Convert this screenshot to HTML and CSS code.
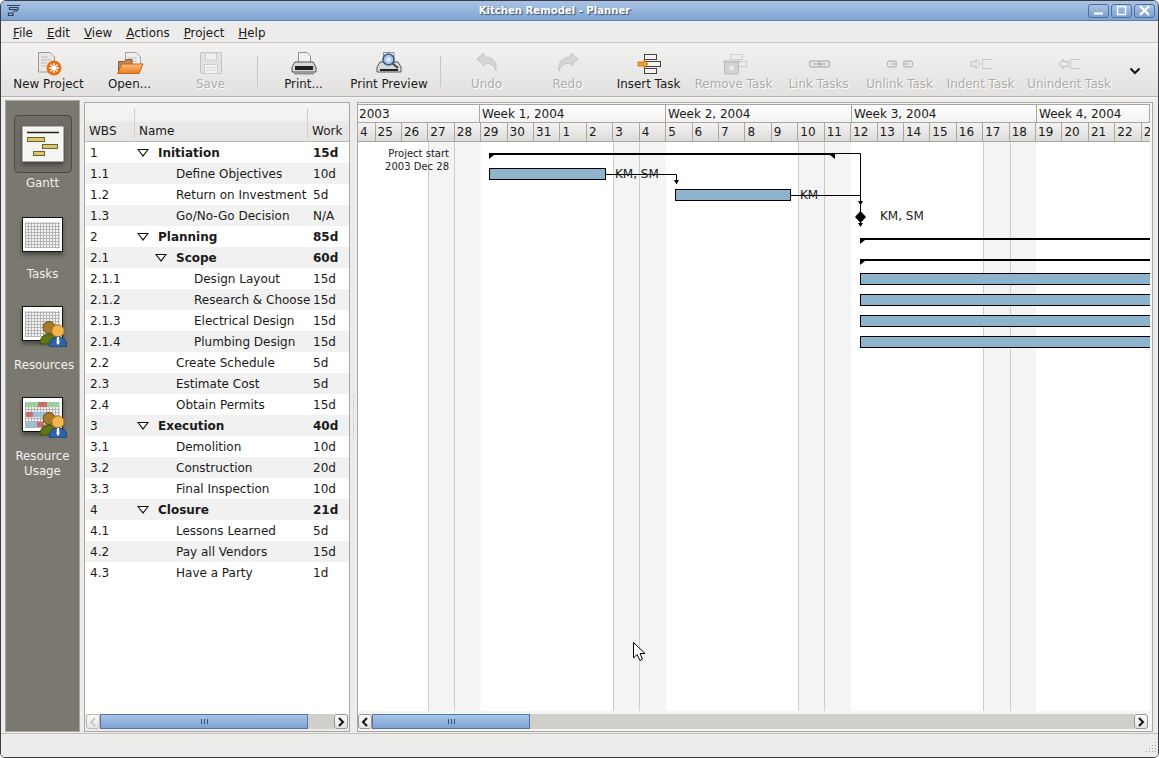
FILE: index.html
```html
<!DOCTYPE html>
<html lang="en">
<head>
  <meta charset="UTF-8">
  <title>Kitchen Remodel - Planner</title>
  <link rel="stylesheet" href="styles.css">
</head>
<body>
  <svg class="defs" width="0" height="0">
    <defs>
      <pattern id="grid" width="3" height="3" patternUnits="userSpaceOnUse">
        <rect width="3" height="3" fill="#f4f4f4"/>
        <path d="M0 .5H3M.5 0V3" stroke="#b4b4b4" stroke-width="1"/>
      </pattern>
      <linearGradient id="fold" x1="0" y1="0" x2="0" y2="1">
        <stop offset="0" stop-color="#fbbf7c"/>
        <stop offset="1" stop-color="#ea7d20"/>
      </linearGradient>
      <symbol id="people" viewBox="0 0 28 26">
        <circle cx="10" cy="6.500" r="6" fill="#a87a2c" stroke="#6d4c14"/>
        <path d="M1 23c0-7 4-10 9-10s9 3 9 10z" fill="#5f7516" stroke="#3e4e0c"/>
        <circle cx="19" cy="10" r="6" fill="#f3b550" stroke="#c07f1c"/>
        <path d="M10 25c0-6 4-9 9-9s9 3 9 9c-4 1.500-14 1.500-18 0z" fill="#2f63a8" stroke="#1e4076"/>
        <path d="M18 16h2l.5 6-1.500 2-1.500-2z" fill="#fff"/>
      </symbol>
    </defs>
  </svg>

  <div class="window">
    <header class="titlebar">
      <svg class="title-icon" width="15" height="14" viewBox="0 0 15 14">
        <path d="M1 1.500H14M3.500 5.500H12V3.500H3.500zM2.500 11.500H7V9H2.500zM7 7H12" fill="none" stroke="#2d3f58" stroke-width="1.200"/>
      </svg>
      <div class="title-text">Kitchen Remodel - Planner</div>
      <div class="title-buttons">
        <span class="wm-btn"><svg width="19" height="11" viewBox="0 0 19 11"><path d="M5 8.500H14" stroke="#fff" stroke-width="2"/></svg></span>
        <span class="wm-btn"><svg width="19" height="11" viewBox="0 0 19 11"><rect x="5.500" y="1.500" width="8" height="8" fill="none" stroke="#fff" stroke-width="1.500"/></svg></span>
        <span class="wm-btn"><svg width="19" height="11" viewBox="0 0 19 11"><path d="M5 1L14 10M14 1L5 10" stroke="#fff" stroke-width="2.200"/></svg></span>
      </div>
    </header>

    <nav class="menubar">
      <span><u>F</u>ile</span>
      <span><u>E</u>dit</span>
      <span><u>V</u>iew</span>
      <span><u>A</u>ctions</span>
      <span><u>P</u>roject</span>
      <span><u>H</u>elp</span>
    </nav>

    <div class="toolbar">
      <div class="tool">
        <svg width="32" height="24" viewBox="0 0 32 24">
          <path d="M5.500 .5H17L21.500 5V20H5.500z" fill="#e8e8e6" stroke="#9a9a98"/>
          <path d="M8 5H15M8 8H18M8 11H14M8 14H13" stroke="#bdbdbb"/>
          <circle cx="21" cy="16" r="7.500" fill="#ea6f17"/>
          <path d="M21 11V21M16 16H26M17.500 12.500L24.500 19.500M24.500 12.500L17.500 19.500" stroke="#fff" stroke-width="1.300"/>
        </svg>
        <span>New Project</span>
      </div>
      <div class="tool">
        <svg width="32" height="24" viewBox="0 0 32 24">
          <path d="M11.500 .5H22L26.500 5V18H11.500z" fill="#eee" stroke="#a0a0a0"/>
          <path d="M14 6H23M14 9H23" stroke="#c4c4c4"/>
          <path d="M4.500 9.500H10L12 7.500H18V20H4.500z" fill="#b98a56" stroke="#8a5d2c"/>
          <path d="M8 12H29L25 21.500H3.500z" fill="url(#fold)" stroke="#c4651a"/>
        </svg>
        <span>Open...</span>
      </div>
      <div class="tool off">
        <svg width="32" height="24" viewBox="0 0 32 24">
          <rect x="5.500" y=".5" width="21" height="21" rx="1" fill="#e3e2e0" stroke="#c4c3c1"/>
          <rect x="10.500" y="1" width="11" height="7" fill="#f1f0ef" stroke="#cfcecc"/>
          <rect x="9.500" y="12.500" width="13" height="9" fill="#f4f3f2" stroke="#cfcecc"/>
          <path d="M11.500 15.500H20.500M11.500 18H20.500" stroke="#d5d4d2"/>
        </svg>
        <span>Save</span>
      </div>
      <div class="sep"></div>
      <div class="tool">
        <svg width="32" height="24" viewBox="0 0 32 24">
          <path d="M10.500 .5H19L22.500 4V12H10.500z" fill="#f2f2f2" stroke="#8f8f8f"/>
          <path d="M7 10H25L28 15V20H4V15z" fill="#d8d8d8" stroke="#555"/>
          <rect x="7" y="14" width="18" height="4" fill="#1e1e1e"/>
          <path d="M6 20.500H26V22.500H6z" fill="#8f8f8f"/>
          <circle cx="25.500" cy="15.500" r="1" fill="#5fc24a"/>
        </svg>
        <span>Print...</span>
      </div>
      <div class="tool preview">
        <svg width="32" height="24" viewBox="0 0 32 24">
          <path d="M10.500 .5H21V12H10.500z" fill="#f2f2f2" stroke="#8f8f8f"/>
          <path d="M7 10H25L28 15V20H4V15z" fill="#d8d8d8" stroke="#555"/>
          <rect x="7" y="17" width="18" height="2" fill="#222"/>
          <circle cx="15.500" cy="7.500" r="5.500" fill="#a8c5e8" stroke="#345a8a" stroke-width="1.500"/>
          <circle cx="15.500" cy="7.500" r="2.200" fill="#e3eefb"/>
          <path d="M19.500 11.500L25 16" stroke="#444" stroke-width="2"/>
        </svg>
        <span>Print Preview</span>
      </div>
      <div class="sep"></div>
      <div class="tool off">
        <svg width="32" height="24" viewBox="0 0 32 24">
          <path d="M6 7L13 1V5C21 5 26 9 25 19C23 13 19 11 13 11V14z" fill="#d6d5d3" stroke="#c6c5c3"/>
        </svg>
        <span>Undo</span>
      </div>
      <div class="tool off">
        <svg width="32" height="24" viewBox="0 0 32 24">
          <path d="M26 7L19 1V5C11 5 6 9 7 19C9 13 13 11 19 11V14z" fill="#d6d5d3" stroke="#c6c5c3"/>
        </svg>
        <span>Redo</span>
      </div>
      <div class="tool">
        <svg width="32" height="24" viewBox="0 0 32 24">
          <g fill="#f4f3f2" stroke="#444">
            <rect x="11.500" y="2.500" width="12" height="5"/>
            <rect x="11.500" y="9.500" width="16" height="5"/>
            <rect x="11.500" y="16.500" width="12" height="5"/>
          </g>
          <path d="M5 10H11V8L15 12L11 16V14H5z" fill="#f0a030" stroke="#b86c10" stroke-width=".8"/>
        </svg>
        <span>Insert Task</span>
      </div>
      <div class="tool off remove">
        <svg width="32" height="24" viewBox="0 0 32 24">
          <g fill="none" stroke="#cfcecc">
            <rect x="12.500" y="2.500" width="12" height="5"/>
            <rect x="12.500" y="9.500" width="16" height="5"/>
          </g>
          <path d="M6.500 10.500H20.500V22H6.500z" fill="#d3d2d0" stroke="#bdbcba"/>
          <path d="M5 8.500H22V11H5z" fill="#c6c5c3"/>
          <circle cx="13.500" cy="16" r="2.500" fill="#ecebe9"/>
        </svg>
        <span>Remove Task</span>
      </div>
      <div class="tool off">
        <svg width="32" height="24" viewBox="0 0 32 24">
          <g fill="none" stroke="#b9b8b6" stroke-width="1.300">
            <rect x="6.500" y="9" width="11" height="6" rx="2.500"/>
            <rect x="15.500" y="9" width="11" height="6" rx="2.500"/>
            <path d="M10 12H23"/>
          </g>
        </svg>
        <span>Link Tasks</span>
      </div>
      <div class="tool off">
        <svg width="32" height="24" viewBox="0 0 32 24">
          <g fill="none" stroke="#bfbebc" stroke-width="1.300">
            <rect x="3.500" y="9" width="9" height="6" rx="2.500"/>
            <rect x="19.500" y="9" width="9" height="6" rx="2.500"/>
            <path d="M7 12H13M19 12H25"/>
          </g>
        </svg>
        <span>Unlink Task</span>
      </div>
      <div class="tool off">
        <svg width="32" height="24" viewBox="0 0 32 24">
          <path d="M6 9.500H11V7L15.500 12L11 17V14.500H6z" fill="#e8e7e5" stroke="#c4c3c1"/>
          <path d="M27 7.500H17.500V16.500H27" fill="none" stroke="#c9c8c6"/>
        </svg>
        <span>Indent Task</span>
      </div>
      <div class="tool off unindent">
        <svg width="32" height="24" viewBox="0 0 32 24">
          <path d="M15.500 9.500H10.500V7L6 12L10.500 17V14.500H15.500z" fill="#e8e7e5" stroke="#c4c3c1"/>
          <path d="M27 7.500H17.500V16.500H27" fill="none" stroke="#c9c8c6"/>
        </svg>
        <span>Unindent Task</span>
      </div>
      <svg class="more" width="12" height="8" viewBox="0 0 12 8">
        <path d="M1.500 1.500L6 6L10.500 1.500" fill="none" stroke="#111" stroke-width="2"/>
      </svg>
    </div>

    <main class="content">
      <aside class="sidebar">
        <div class="side-item">
          <div class="side-btn active">
            <svg class="sheet" width="42" height="36" viewBox="0 0 42 36">
              <rect x="1" y="1" width="40" height="34" fill="#f4f4f0" stroke="#fff"/>
              <path d="M5 6.500H37" stroke="#222" stroke-width="1.500"/>
              <g fill="#dcc56c" stroke="#6d6330">
                <rect x="5.500" y="11.500" width="17" height="4"/>
                <rect x="20.500" y="18.500" width="15" height="4"/>
                <rect x="11.500" y="25.500" width="11" height="4"/>
              </g>
            </svg>
          </div>
          <div class="side-label">Gantt</div>
        </div>
        <div class="side-item">
          <div class="side-btn">
            <svg class="sheet" width="42" height="36" viewBox="0 0 42 36">
              <rect x=".5" y=".5" width="40" height="34" fill="#fff" stroke="#111"/>
              <rect x="3" y="5" width="35" height="26" fill="url(#grid)"/>
            </svg>
          </div>
          <div class="side-label">Tasks</div>
        </div>
        <div class="side-item">
          <div class="side-btn">
            <div class="side-icon">
              <svg class="sheet" width="42" height="36" viewBox="0 0 42 36">
                <rect x=".5" y=".5" width="40" height="34" fill="#fff" stroke="#111"/>
                <rect x="3" y="5" width="35" height="26" fill="url(#grid)"/>
              </svg>
              <svg class="people" width="28" height="26"><use href="#people"/></svg>
            </div>
          </div>
          <div class="side-label">Resources</div>
        </div>
        <div class="side-item">
          <div class="side-btn">
            <div class="side-icon">
              <svg class="sheet" width="42" height="36" viewBox="0 0 42 36">
                <rect x=".5" y=".5" width="40" height="34" fill="#fff" stroke="#111"/>
                <rect x="3" y="5" width="35" height="26" fill="url(#grid)"/>
                <path d="M4 5H16V10H4zM25 5H37V10H25z" fill="#9ccf9a"/>
                <path d="M16 5H25V10H16zM4 15H11V20H4z" fill="#c96b70"/>
                <path d="M11 15H30V20H11zM4 25H15V30H4z" fill="#9cc0dc"/>
                <path d="M15 25H22V30H15z" fill="#c96b70"/>
              </svg>
              <svg class="people" width="28" height="26"><use href="#people"/></svg>
            </div>
          </div>
          <div class="side-label">Resource Usage</div>
        </div>
      </aside>

      <section class="pane tree-pane">
        <div class="tree-head">
          <div>WBS</div>
          <div class="sep-left">Name</div>
          <div class="sep-left">Work</div>
        </div>
        <div class="tree-body">
          <div class="row group"><div>1</div><div class="name"><i class="exp"></i>Initiation</div><div>15d</div></div>
          <div class="row"><div>1.1</div><div class="name d1"><i class="leaf"></i>Define Objectives</div><div>10d</div></div>
          <div class="row"><div>1.2</div><div class="name d1"><i class="leaf"></i>Return on Investment</div><div>5d</div></div>
          <div class="row"><div>1.3</div><div class="name d1"><i class="leaf"></i>Go/No-Go Decision</div><div>N/A</div></div>
          <div class="row group"><div>2</div><div class="name"><i class="exp"></i>Planning</div><div>85d</div></div>
          <div class="row group"><div>2.1</div><div class="name d1"><i class="exp"></i>Scope</div><div>60d</div></div>
          <div class="row"><div>2.1.1</div><div class="name d2"><i class="leaf"></i>Design Layout</div><div>15d</div></div>
          <div class="row"><div>2.1.2</div><div class="name d2"><i class="leaf"></i>Research &amp; Choose</div><div>15d</div></div>
          <div class="row"><div>2.1.3</div><div class="name d2"><i class="leaf"></i>Electrical Design</div><div>15d</div></div>
          <div class="row"><div>2.1.4</div><div class="name d2"><i class="leaf"></i>Plumbing Design</div><div>15d</div></div>
          <div class="row"><div>2.2</div><div class="name d1"><i class="leaf"></i>Create Schedule</div><div>5d</div></div>
          <div class="row"><div>2.3</div><div class="name d1"><i class="leaf"></i>Estimate Cost</div><div>5d</div></div>
          <div class="row"><div>2.4</div><div class="name d1"><i class="leaf"></i>Obtain Permits</div><div>15d</div></div>
          <div class="row group"><div>3</div><div class="name"><i class="exp"></i>Execution</div><div>40d</div></div>
          <div class="row"><div>3.1</div><div class="name d1"><i class="leaf"></i>Demolition</div><div>10d</div></div>
          <div class="row"><div>3.2</div><div class="name d1"><i class="leaf"></i>Construction</div><div>20d</div></div>
          <div class="row"><div>3.3</div><div class="name d1"><i class="leaf"></i>Final Inspection</div><div>10d</div></div>
          <div class="row group"><div>4</div><div class="name"><i class="exp"></i>Closure</div><div>21d</div></div>
          <div class="row"><div>4.1</div><div class="name d1"><i class="leaf"></i>Lessons Learned</div><div>5d</div></div>
          <div class="row"><div>4.2</div><div class="name d1"><i class="leaf"></i>Pay all Vendors</div><div>15d</div></div>
          <div class="row"><div>4.3</div><div class="name d1"><i class="leaf"></i>Have a Party</div><div>1d</div></div>
        </div>
        <div class="hscroll tree-scroll">
          <span class="sb-btn dim"><svg width="8" height="10" viewBox="0 0 8 10"><path d="M6 1L2 5L6 9" fill="none" stroke="#bbb" stroke-width="1.500"/></svg></span>
          <span class="sb-thumb"><b></b><b></b><b></b></span>
          <span class="sb-trough"></span>
          <span class="sb-btn"><svg width="8" height="10" viewBox="0 0 8 10"><path d="M2 1L6 5L2 9" fill="none" stroke="#111" stroke-width="2"/></svg></span>
        </div>
      </section>

      <div class="handle"></div>

      <section class="pane gantt-pane">
        <div class="years">
          <div>2003</div>
          <div>Week 1, 2004</div>
          <div>Week 2, 2004</div>
          <div>Week 3, 2004</div>
          <div>Week 4, 2004</div>
        </div>
        <div class="days">
          <div>4</div><div>25</div><div>26</div><div>27</div><div>28</div><div>29</div><div>30</div><div>31</div>
          <div>1</div><div>2</div><div>3</div><div>4</div><div>5</div><div>6</div><div>7</div><div>8</div><div>9</div>
          <div>10</div><div>11</div><div>12</div><div>13</div><div>14</div><div>15</div><div>16</div><div>17</div><div>18</div>
          <div>19</div><div>20</div><div>21</div><div>22</div><div>23</div>
        </div>
        <svg class="chart" width="792" height="569" viewBox="358 142 792 569">
          <g fill="#f4f4f4">
            <rect x="428" y="142" width="52.500" height="569"/>
            <rect x="613" y="142" width="53" height="569"/>
            <rect x="798" y="142" width="53" height="569"/>
            <rect x="983" y="142" width="53" height="569"/>
          </g>
          <path d="M428.500 142V711M454.500 142V711M613.500 142V711M639.500 142V711M798.500 142V711M824.500 142V711M983.500 142V711M1010.500 142V711" stroke="#cdcdcd"/>

          <g class="note">
            <text x="449" y="157" text-anchor="end">Project start</text>
            <text x="449" y="170" text-anchor="end">2003 Dec 28</text>
          </g>

          <!-- links -->
          <path d="M606 174.500H676.500V180M791 195.500H860.500M835 153.500H860.500V201M860.500 205V226" fill="none" stroke="#000"/>
          <path d="M674 180H679L676.500 184.500zM858 201H863L860.500 205.500zM858 223H863L860.500 227z" fill="#000"/>

          <!-- summary tasks -->
          <path d="M489 153H835V155H835V159L830 155H494L489 159z" fill="#000"/>
          <path d="M860 238H1150V240H865L860 244z" fill="#000"/>
          <path d="M860 259H1150V261H865L860 265z" fill="#000"/>

          <!-- tasks -->
          <g fill="#8db4cc" stroke="#000">
            <rect x="489.500" y="168.500" width="116" height="11"/>
            <rect x="675.500" y="189.500" width="115" height="11"/>
            <rect x="860.500" y="273.500" width="295" height="11"/>
            <rect x="860.500" y="294.500" width="295" height="11"/>
            <rect x="860.500" y="315.500" width="295" height="11"/>
            <rect x="860.500" y="336.500" width="295" height="11"/>
          </g>
          <path d="M855 217L860.500 211L866 217L860.500 223z" fill="#000"/>

          <g class="res">
            <text x="615" y="178">KM, SM</text>
            <text x="800" y="199">KM</text>
            <text x="880" y="220">KM, SM</text>
          </g>

          <!-- mouse pointer -->
          <path d="M633.500 642.500V658L637 654.500L640 660.500L642.500 659L640 653.500H645z" fill="#fff" stroke="#000"/>
        </svg>
        <div class="hscroll gantt-scroll">
          <span class="sb-btn"><svg width="8" height="10" viewBox="0 0 8 10"><path d="M6 1L2 5L6 9" fill="none" stroke="#111" stroke-width="2"/></svg></span>
          <span class="sb-thumb"><b></b><b></b><b></b></span>
          <span class="sb-trough"></span>
          <span class="sb-btn"><svg width="8" height="10" viewBox="0 0 8 10"><path d="M2 1L6 5L2 9" fill="none" stroke="#111" stroke-width="2"/></svg></span>
        </div>
      </section>
    </main>

    <footer class="statusbar">
      <svg width="14" height="14" viewBox="0 0 14 14">
        <path d="M12 1h1v1h-1zM12 4h1v1h-1zM9 4h1v1H9zM12 7h1v1h-1zM9 7h1v1H9zM6 7h1v1H6zM12 10h1v1h-1zM9 10h1v1H9zM6 10h1v1H6zM3 10h1v1H3z" fill="#a8a6a2"/>
      </svg>
    </footer>
  </div>
</body>
</html>
```

FILE: styles.css
```css
* {
  box-sizing: border-box;
}
html, body {
  margin: 0;
  height: 100%;
  background-color: #fff;
}
body {
  font-family: "DejaVu Sans", sans-serif;
  font-size: 12px;
  color: #1a1a1a;
  overflow: hidden;
}
.defs {
  position: absolute;
}
.window {
  width: 1159px;
  height: 758px;
  display: flex;
  flex-direction: column;
  background-color: #edecea;
  border: 1px solid #3a3f46;
  border-radius: 6px 6px 5px 5px;
  overflow: hidden;
}

/* title bar */
.titlebar {
  height: 20px;
  flex: none;
  display: flex;
  align-items: center;
  padding: 0 3px 0 5px;
  background: linear-gradient(#a9c3e4, #9ab8de 40%, #7fa3d2);
  border-bottom: 1px solid #5b7fae;
}
.title-icon {
  flex: none;
}
.title-text {
  flex: 1;
  text-align: center;
  font-size: 10.1px;
  font-weight: bold;
  color: #fff;
  text-shadow: 1px 1px 1px #3c4d66;
}
.title-buttons {
  display: flex;
  gap: 2px;
}
.wm-btn {
  width: 21px;
  height: 14px;
  display: flex;
  align-items: center;
  justify-content: center;
  border: 1px solid #4f6f9c;
  border-radius: 3px;
  background: linear-gradient(#a9c3e4, #7d9fcd);
}

/* menu */
.menubar {
  height: 22px;
  flex: none;
  display: flex;
  align-items: center;
  gap: 14px;
  padding: 2px 0 0 12px;
  font-size: 11.9px;
  background-color: #edecea;
  border-bottom: 1px solid #c9c7c3;
}

/* toolbar */
.toolbar {
  height: 54px;
  flex: none;
  display: flex;
  align-items: flex-start;
  padding: 9px 0 0 7px;
  font-size: 11.9px;
  background: linear-gradient(#f3f2f1, #e3e1df);
  border-bottom: 1px solid #b5b3af;
}
.tool {
  width: 81px;
  flex: none;
  display: flex;
  flex-direction: column;
  align-items: center;
  gap: 1px;
  white-space: nowrap;
}
.tool.preview {
  width: 90px;
}
.tool.remove {
  width: 89px;
}
.tool.unindent {
  width: 96px;
}
.tool svg {
  display: block;
}
.tool.off span {
  color: #aeacaa;
  text-shadow: 1px 1px 0 #fff;
}
.sep {
  width: 12px;
  flex: none;
  height: 31px;
  margin-top: 4px;
  background: linear-gradient(#c8c6c2, #c8c6c2) center / 1px 100% no-repeat;
}
.more {
  margin: 15px 0 0 12px;
}

/* main area */
.content {
  flex: 1;
  min-height: 0;
  display: flex;
  padding: 2px 3px 1px 4px;
  border-top: 1px solid #f8f7f6;
  border-bottom: 1px solid #c4c2be;
}
.sidebar {
  width: 75px;
  flex: none;
  margin-right: 4px;
  padding: 14px 7px 0 8px;
  background-color: #7b7870;
  border: 1px solid #e4e3e0;
  outline: 1px solid #aaa8a4;
  outline-offset: -1px;
}
.side-item {
  height: 91px;
  color: #f2f1ef;
  text-align: center;
}
.side-btn {
  width: 58px;
  height: 58px;
  display: flex;
  align-items: center;
  justify-content: center;
  border: 1px solid transparent;
  border-radius: 4px;
}
.side-btn svg {
  display: block;
}
.sheet {
  filter: drop-shadow(0 3px 2px rgba(0, 0, 0, 0.4));
}
.side-btn.active {
  background-color: #6f6c65;
  border-color: #4b4943;
}
.side-label {
  margin: 3px -7px 0 -8px;
  padding: 0 8px;
  font-size: 11.8px;
  line-height: 15px;
}
.side-icon {
  position: relative;
  width: 42px;
  height: 40px;
}
.people {
  position: absolute;
  right: -3px;
  bottom: -1px;
}

/* panes */
.pane {
  display: flex;
  flex-direction: column;
  min-height: 0;
  min-width: 0;
  background-color: #edecea;
  border: 1px solid #a9a7a3;
}
.tree-pane {
  width: 266px;
  flex: none;
  margin-top: 2px;
}
.handle {
  width: 7px;
  flex: none;
  background: radial-gradient(circle, #a8a6a2 .7px, transparent 1px) center / 3px 3px repeat-y;
  clip-path: inset(293px 0 290px 0);
}
.gantt-pane {
  flex: 1;
  margin-top: 2px;
  margin-right: 2px;
  padding-right: 2px;
  background-color: #f6f5f4;
}

/* task tree */
.tree-head {
  height: 39px;
  flex: none;
  display: grid;
  grid-template-columns: 49px 173px 1fr;
  align-items: end;
  padding-bottom: 3px;
  background: linear-gradient(#f6f5f4, #f1f0ef 48%, #eae9e7 50%, #e6e5e3);
  border-bottom: 1px solid #bbb9b5;
}
.tree-head > div {
  padding-left: 4px;
  height: 30px;
  display: flex;
  align-items: flex-end;
}
.tree-head .sep-left {
  border-left: 1px solid #d0cecb;
  padding-left: 4px;
}
.tree-body {
  flex: 1;
  min-height: 0;
  background-color: #fff;
}
.row {
  height: 21px;
  display: grid;
  grid-template-columns: 49px 173px 1fr;
  align-items: center;
  white-space: nowrap;
}
.row:nth-child(even) {
  background-color: #f1f1f1;
}
.row > div:first-child {
  padding-left: 5px;
}
.row > div:last-child {
  padding-left: 6px;
}
.group {
  font-weight: bold;
}
.group > div:first-child {
  font-weight: normal;
}
.name {
  display: flex;
  align-items: center;
  padding-left: 3px;
}
.name.d1 {
  padding-left: 21px;
}
.name.d2 {
  padding-left: 39px;
}
.exp, .leaf {
  flex: none;
  width: 21px;
  height: 8px;
}
.exp {
  position: relative;
}
.exp::before {
  content: "";
  position: absolute;
  left: 0;
  top: 0;
  border-left: 6px solid transparent;
  border-right: 6px solid transparent;
  border-top: 8px solid #111;
}
.exp::after {
  content: "";
  position: absolute;
  left: 2px;
  top: 1px;
  border-left: 4px solid transparent;
  border-right: 4px solid transparent;
  border-top: 5.500px solid #fff;
}

/* gantt header */
.years {
  height: 19px;
  flex: none;
  margin-top: 1px;
  display: grid;
  grid-template-columns: 122px 186px 186px 185px 1fr;
  background: linear-gradient(#fdfdfd, #f4f3f2);
  border-top: 1px solid #a9a7a3;
  border-bottom: 1px solid #a9a7a3;
  line-height: 19px;
}
.years > div {
  padding-left: 1px;
  border-right: 1px solid #a9a7a3;
  white-space: nowrap;
}
.years > div + div {
  padding-left: 2px;
}
.days {
  height: 19px;
  flex: none;
  display: grid;
  grid-template-columns: 17.500px repeat(30, 26.430px);
  overflow: hidden;
  background: linear-gradient(#f4f3f2, #dddbd8);
  border-bottom: 1px solid #a9a7a3;
  line-height: 18px;
}
.days > div {
  padding-left: 2px;
  border-right: 1px solid #a9a7a3;
}
.chart {
  display: block;
  flex: none;
  background-color: #fff;
}
.note text {
  font-size: 10px;
  fill: #222;
}
.res text {
  font-size: 12px;
  fill: #222;
}

/* scrollbars */
.hscroll {
  height: 15px;
  flex: none;
  display: flex;
  margin: auto 1px 2px;
}
.gantt-scroll {
  margin-left: 0;
  margin-right: 2px;
}
.sb-btn {
  width: 14px;
  flex: none;
  display: flex;
  align-items: center;
  justify-content: center;
  background: linear-gradient(#fbfbfa, #e6e4e2);
  border: 1px solid #9a9894;
  border-radius: 3px;
}
.sb-btn.dim {
  border-color: #bcbab6;
}
.sb-thumb {
  display: flex;
  align-items: center;
  justify-content: center;
  gap: 2px;
  background: linear-gradient(#a9c4e6, #7ea2d2);
  border: 1px solid #4f77ad;
}
.sb-thumb b {
  width: 1px;
  height: 5px;
  background-color: #34557f;
}
.sb-trough {
  flex: 1;
  background-color: #d1cfcc;
}
.tree-scroll .sb-thumb {
  width: 208px;
}
.gantt-scroll .sb-thumb {
  width: 158px;
}

/* status bar */
.statusbar {
  height: 23px;
  flex: none;
  display: flex;
  justify-content: flex-end;
  align-items: flex-end;
  padding: 0 1px 2px 0;
  background-color: #edecea;
}
```
